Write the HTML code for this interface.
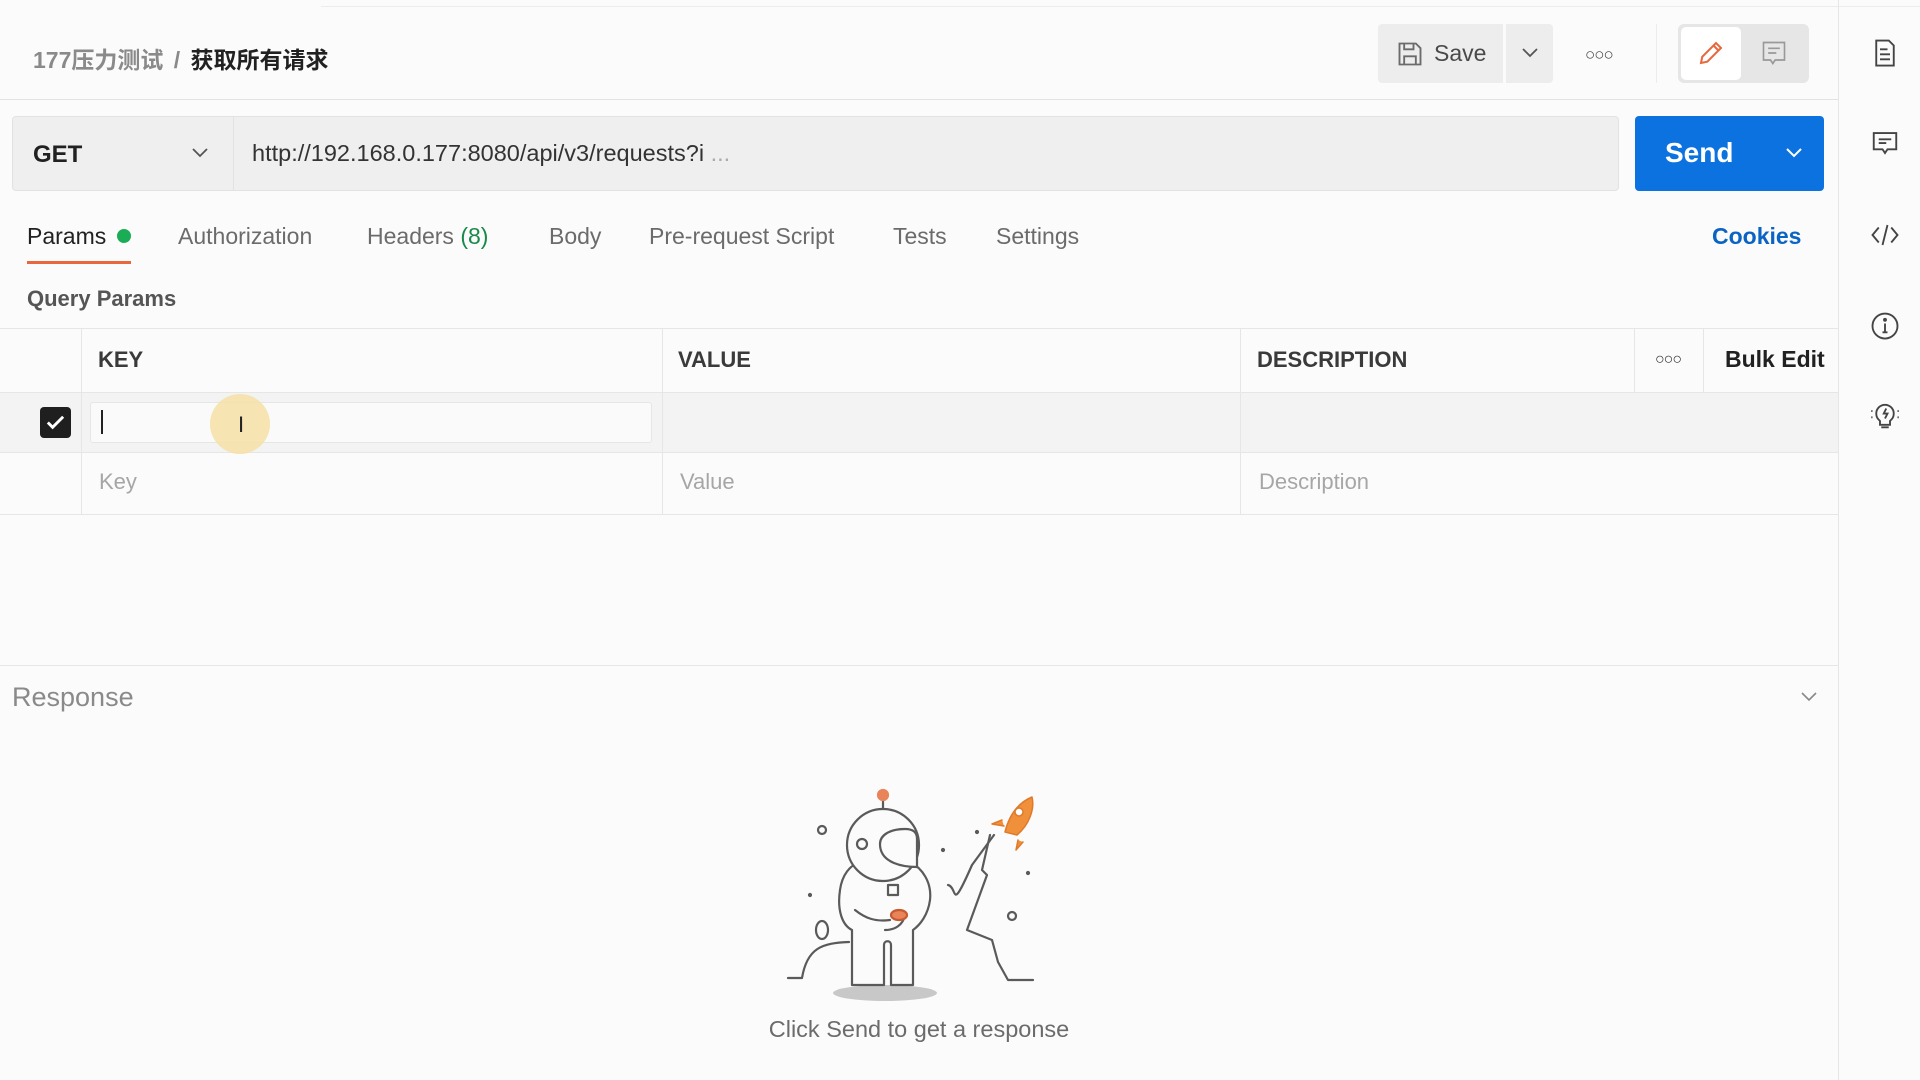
<!DOCTYPE html>
<html><head><meta charset="utf-8"><style>
*{box-sizing:border-box;margin:0;padding:0}
body{width:1920px;height:1080px;background:#fbfbfb;font-family:"Liberation Sans","Noto Sans CJK SC",sans-serif;position:relative;overflow:hidden;color:#212121}
.a{position:absolute}
.tab{position:absolute;top:223px;font-size:23px;color:#6b6b6b}
.th{position:absolute;top:347px;font-size:22px;font-weight:bold;color:#3a3a3a}
.ph{position:absolute;top:469px;font-size:22px;color:#a6a6a6}
.vl{position:absolute;width:1px;background:#e6e6e6}
.ic{position:absolute;left:1870px;width:30px;height:30px}
</style></head><body>
<div class="a" style="left:321px;top:6px;width:1600px;height:1px;background:#ececec"></div>
<div class="a" style="left:33px;top:41px;font-size:23px;color:#8a8a8a;font-weight:bold">177压力测试 <span style="margin:0 4px">/</span> <span style="color:#212121">获取所有请求</span></div>
<!-- Save -->
<div class="a" style="left:1378px;top:24px;width:125px;height:59px;background:#ededed;border-radius:4px 0 0 4px"></div>
<div class="a" style="left:1506px;top:24px;width:47px;height:59px;background:#ededed;border-radius:0 4px 4px 0"></div>
<svg class="a" style="left:1396px;top:40px" width="28" height="28" viewBox="0 0 24 24" fill="none" stroke="#6b6b6b" stroke-width="1.6"><path d="M3 3h14l4 4v14H3z"/><path d="M7 3v5h8V3"/><path d="M7 21v-7h10v7"/></svg>
<div class="a" style="left:1434px;top:40px;font-size:23px;color:#4a4a4a">Save</div>
<svg class="a" style="left:1520px;top:46px" width="20" height="14" viewBox="0 0 20 14" fill="none" stroke="#555" stroke-width="1.8"><path d="M3 3l7 7 7-7"/></svg>
<div class="a" style="left:1585px;top:45px;font-size:17px;color:#444;letter-spacing:-1px;font-weight:bold">○○○</div>
<div class="a" style="left:1656px;top:24px;width:1px;height:59px;background:#ececec"></div>
<div class="a" style="left:1678px;top:24px;width:131px;height:59px;background:#e6e6e6;border-radius:6px"></div>
<div class="a" style="left:1681px;top:27px;width:60px;height:53px;background:#fff;border-radius:5px"></div>
<svg class="a" style="left:1696px;top:38px" width="30" height="30" viewBox="0 0 24 24" fill="none" stroke="#e8673c" stroke-width="1.6"><path d="M4 20l1-5L16 4l4 4L9 19z"/><path d="M14 6l4 4"/></svg>
<svg class="a" style="left:1760px;top:39px" width="28" height="28" viewBox="0 0 24 24" fill="none" stroke="#999" stroke-width="1.4"><path d="M3 3h18v15h-8l-2 3-2-3H3z"/><path d="M7 8h10M7 12h7"/></svg>
<div class="a" style="left:0;top:99px;width:1838px;height:1px;background:#e2e2e2"></div>
<!-- sidebar -->
<div class="a" style="left:1838px;top:0;width:1px;height:1080px;background:#e6e6e6"></div>
<svg class="ic" style="top:38px" viewBox="0 0 24 24" fill="none" stroke="#444" stroke-width="1.5"><path d="M5 2h10l4 4v16H5z"/><path d="M8 9h6M8 13h8M8 17h8"/></svg>
<svg class="ic" style="top:128px" viewBox="0 0 24 24" fill="none" stroke="#444" stroke-width="1.5"><path d="M3 4h18v13h-7l-2 3-2-3H3z"/><path d="M7 9h10M7 12h6"/></svg>
<svg class="ic" style="top:220px" viewBox="0 0 24 24" fill="none" stroke="#444" stroke-width="1.5"><path d="M7 6l-5 6 5 6M17 6l5 6-5 6M14 4l-4 16"/></svg>
<svg class="ic" style="top:311px" viewBox="0 0 24 24" fill="none" stroke="#444" stroke-width="1.5"><circle cx="12" cy="12" r="10"/><path d="M12 10v7M10 17h4"/><circle cx="12" cy="7" r=".8" fill="#444"/></svg>
<svg class="ic" style="top:401px" viewBox="0 0 24 24" fill="none" stroke="#444" stroke-width="1.5"><path d="M8 16c-2-2-3-3-3-6a7 7 0 0114 0c0 3-1 4-3 6v3H8z"/><path d="M9 21h6M13 6l-2 4h3l-2 4"/><path d="M1 8h1M1 13h1M22 8h1M22 13h1"/></svg>
<!-- URL bar -->
<div class="a" style="left:12px;top:116px;width:1607px;height:75px;background:#efefef;border:1px solid #e2e2e2;border-radius:4px"></div>
<div class="a" style="left:233px;top:117px;width:1px;height:73px;background:#e2e2e2"></div>
<div class="a" style="left:33px;top:141px;font-size:24px;font-weight:bold;color:#212121">GET</div>
<svg class="a" style="left:190px;top:146px" width="20" height="14" viewBox="0 0 20 14" fill="none" stroke="#555" stroke-width="1.8"><path d="M3 3l7 7 7-7"/></svg>
<div class="a" style="left:252px;top:140px;font-size:23.5px;color:#333">http://192.168.0.177:8080/api/v3/requests?i <span style="color:#aaa">...</span></div>
<div class="a" style="left:1635px;top:116px;width:189px;height:75px;background:#0c72e0;border-radius:4px"></div>
<div class="a" style="left:1665px;top:137px;font-size:28px;font-weight:bold;color:#fff">Send</div>
<svg class="a" style="left:1784px;top:146px" width="20" height="14" viewBox="0 0 20 14" fill="none" stroke="#fff" stroke-width="2"><path d="M3 3l7 7 7-7"/></svg>
<!-- tabs -->
<div class="tab" style="left:27px;color:#212121">Params</div>
<div class="a" style="left:117px;top:229px;width:14px;height:14px;border-radius:50%;background:#1aad55"></div>
<div class="a" style="left:27px;top:261px;width:104px;height:3px;background:#e8673c"></div>
<div class="tab" style="left:178px">Authorization</div>
<div class="tab" style="left:367px">Headers <span style="color:#1a8a4a">(8)</span></div>
<div class="tab" style="left:549px">Body</div>
<div class="tab" style="left:649px">Pre-request Script</div>
<div class="tab" style="left:893px">Tests</div>
<div class="tab" style="left:996px">Settings</div>
<div class="tab" style="left:1712px;color:#0b64c4;font-weight:bold">Cookies</div>
<div class="a" style="left:27px;top:286px;font-size:22px;font-weight:bold;color:#555">Query Params</div>
<!-- table -->
<div class="a" style="left:0;top:328px;width:1838px;height:1px;background:#e6e6e6"></div>
<div class="a" style="left:0;top:392px;width:1838px;height:61px;background:#f3f3f3;border-top:1px solid #e6e6e6;border-bottom:1px solid #e6e6e6"></div>
<div class="a" style="left:0;top:514px;width:1838px;height:1px;background:#e6e6e6"></div>
<div class="vl" style="left:81px;top:328px;height:186px"></div>
<div class="vl" style="left:662px;top:328px;height:186px"></div>
<div class="vl" style="left:1240px;top:328px;height:186px"></div>
<div class="vl" style="left:1634px;top:328px;height:64px"></div>
<div class="vl" style="left:1703px;top:328px;height:64px"></div>
<div class="th" style="left:98px">KEY</div>
<div class="th" style="left:678px">VALUE</div>
<div class="th" style="left:1257px">DESCRIPTION</div>
<div class="a" style="left:1655px;top:351px;font-size:16px;color:#333;letter-spacing:-1px;font-weight:bold">○○○</div>
<div class="a" style="left:1725px;top:346px;font-size:23px;font-weight:bold;color:#212121">Bulk Edit</div>
<div class="a" style="left:40px;top:407px;width:31px;height:31px;background:#1f1f1f;border-radius:4px"></div>
<svg class="a" style="left:44px;top:411px" width="23" height="23" viewBox="0 0 24 24" fill="none" stroke="#fff" stroke-width="3"><path d="M4 12l5 5L20 6"/></svg>
<div class="a" style="left:90px;top:402px;width:562px;height:41px;background:#fafafa;border:1px solid #e6e6e6;border-radius:3px"></div>
<div class="a" style="left:101px;top:410px;width:2px;height:24px;background:#222"></div>
<div class="a" style="left:210px;top:394px;width:60px;height:60px;border-radius:50%;background:#f6dfa6;opacity:.85"></div>
<div class="a" style="left:238px;top:412px;font-size:22px;color:#222">I</div>
<div class="ph" style="left:99px">Key</div>
<div class="ph" style="left:680px">Value</div>
<div class="ph" style="left:1259px">Description</div>
<!-- response -->
<div class="a" style="left:0;top:665px;width:1838px;height:1px;background:#e6e6e6"></div>
<div class="a" style="left:12px;top:682px;font-size:27px;color:#8a8a8a">Response</div>
<svg class="a" style="left:1799px;top:690px" width="20" height="14" viewBox="0 0 20 14" fill="none" stroke="#888" stroke-width="1.6"><path d="M3 3l7 7 7-7"/></svg>
<svg class="a" style="left:760px;top:770px" width="300" height="250" viewBox="0 0 300 250" fill="none" stroke="#5a5a5a" stroke-width="2.2" stroke-linejoin="round" stroke-linecap="round">
<ellipse cx="125" cy="223" rx="52" ry="8" fill="#c8c8c8" stroke="none"/>
<path d="M28 208h14c5-30 20-35 47-36"/>
<path d="M188 115c10 2 2 30 24-20l22-30"/>
<path d="M230 65l-8 35 5 5-20 55 25 10 6 22 10 18h25"/>
<line x1="123" y1="30" x2="123" y2="40"/><circle cx="123" cy="25" r="5" fill="#e8835a" stroke="#e8835a"/>
<path d="M92 215V160c-10-5-15-20-12-40 2-15 10-25 20-28h50c12 6 22 20 20 38-2 15-10 25-17 30v55h-22v-40c0-5-7-5-7 0v40z" fill="#fbfbfb"/>
<circle cx="123" cy="75" r="36" fill="#fbfbfb"/>
<path d="M120 74c0-9 10-15 25-15 8 0 12 3 12 10v28c-12 0-37-3-37-23z" fill="#fbfbfb"/>
<circle cx="102" cy="74" r="5"/>
<rect x="128" y="115" width="10" height="10"/>
<path d="M95 140c10 8 20 12 35 10M125 160c10 0 18-5 20-15"/>
<ellipse cx="139" cy="145" rx="8" ry="5" fill="#e8835a" stroke="#c65a30"/>
<circle cx="62" cy="60" r="4"/><circle cx="252" cy="146" r="4"/>
<ellipse cx="62" cy="160" rx="6" ry="9"/>
<circle cx="50" cy="125" r="1" fill="#5a5a5a"/><circle cx="183" cy="80" r="1" fill="#5a5a5a"/><circle cx="217" cy="62" r="1" fill="#5a5a5a"/><circle cx="268" cy="103" r="1" fill="#5a5a5a"/>
<path d="M245 62c5-20 15-30 27-35 3 12-3 28-15 38z" fill="#f0903a" stroke="#e07a2a" stroke-width="1.5"/>
<path d="M242 50l-10 4 12 2M258 70l-2 10 7-8" fill="#f0903a" stroke="#e07a2a" stroke-width="1.5"/>
<circle cx="259" cy="42" r="4" fill="#fff" stroke="#e07a2a" stroke-width="1.5"/>
</svg>
<div class="a" style="left:0;width:1838px;top:1016px;text-align:center;font-size:23.5px;color:#6b6b6b">Click Send to get a response</div>
</body></html>
